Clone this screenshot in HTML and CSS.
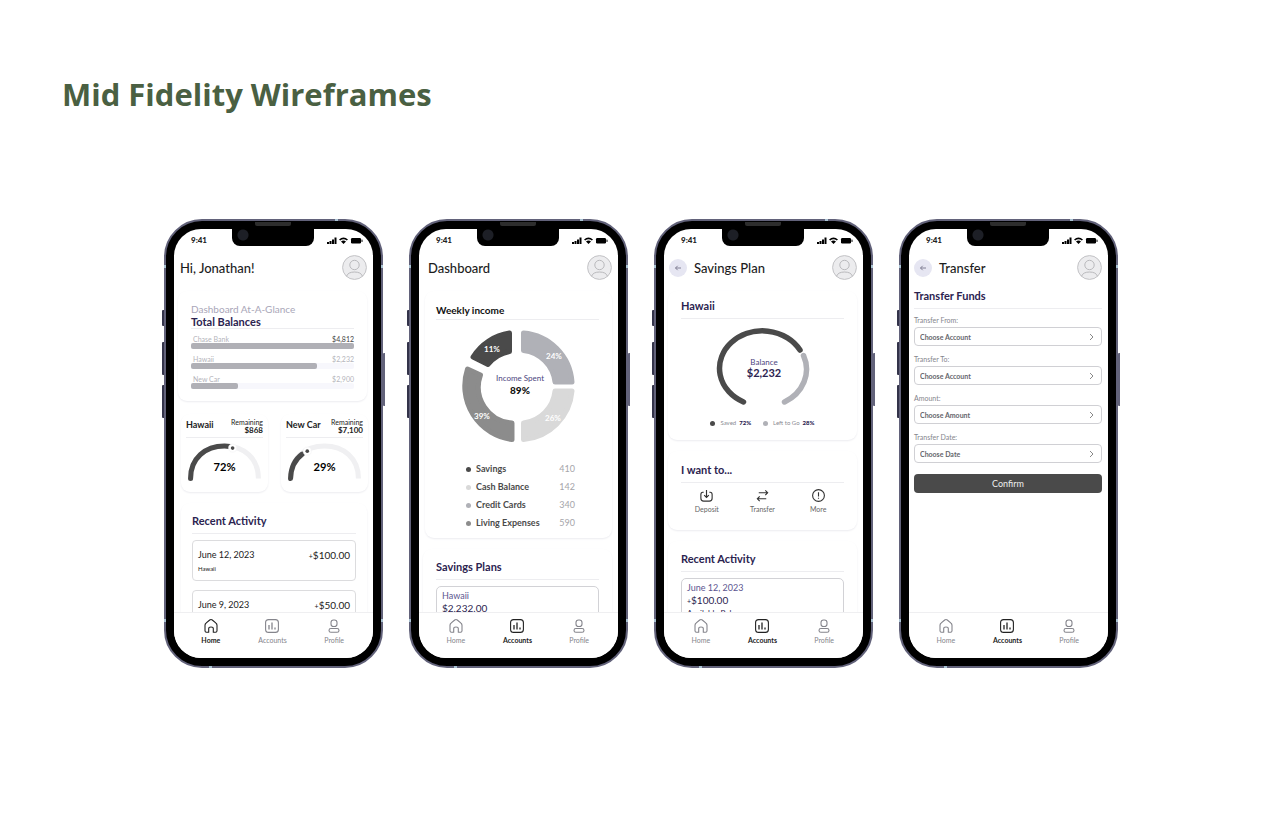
FILE: index.html
```
<!DOCTYPE html>
<html lang="en">
<head>
<meta charset="utf-8">
<meta name="viewport" content="width=device-width, initial-scale=1">
<title>Mid Fidelity Wireframes</title>
<link rel="stylesheet" href="styles.css">
</head>
<body>
<svg class="defs" aria-hidden="true">
  <symbol id="signal" viewBox="0 0 36 11">
    <path d="M0 7h2v2H0zM2.500 6h2v3h-2zM5 4.500h2v4.500H5zM7.500 2.500h2v6.500h-2z"/>
    <path d="M12 4.400Q16.500 .4 21 4.400L19.800 5.600Q16.500 2.800 13.200 5.600zM14 6.400Q16.500 4.400 19 6.400L16.500 9z"/>
    <rect x="24" y="3" width="10" height="5.500" rx="1.200"/><rect x="34.500" y="4.500" width="1" height="2.500" rx=".5"/>
  </symbol>
  <symbol id="avatar" viewBox="0 0 25 25">
    <circle cx="12.500" cy="12.500" r="11.900" fill="#ececee" stroke="#c2c2c5"/>
    <circle cx="12.500" cy="10" r="4.700" fill="none" stroke="#b9b9bc"/>
    <path d="M4.500 21.300Q6 17 12.500 17t8 4.300" fill="none" stroke="#b9b9bc"/>
  </symbol>
  <symbol id="back" viewBox="0 0 18 18">
    <path d="M12 9H6.500M8.700 6.800L6.500 9l2.200 2.200" fill="none" stroke="#77758a" stroke-width=".9"/>
  </symbol>
  <symbol id="home" viewBox="0 0 16 16">
    <path d="M4.600 14.200H3.400Q2 14.200 2 12.700V7.200Q2 6 3 5.200L6.700 2Q8 1 9.300 2L13 5.200Q14 6 14 7.200v5.500q0 1.500-1.400 1.500H10.300V10.600Q10.300 9 8 9t-2.300 1.600v3.600z" fill="none" stroke="currentColor" stroke-width="1.100" stroke-linejoin="round"/>
  </symbol>
  <symbol id="chart" viewBox="0 0 16 16">
    <rect x="1.600" y="1.600" width="12.800" height="12.800" rx="3" fill="none" stroke="currentColor" stroke-width="1.100"/>
    <path d="M5 7v4.500M8 4.500v7M11 9.500v2" fill="none" stroke="currentColor" stroke-width="1.300"/>
  </symbol>
  <symbol id="person" viewBox="0 0 16 16">
    <rect x="5" y="2" width="6" height="6.500" rx="2.600" fill="none" stroke="currentColor" stroke-width="1.100"/>
    <rect x="3" y="10.500" width="10" height="3.800" rx="1.900" fill="none" stroke="currentColor" stroke-width="1.100"/>
  </symbol>
</svg>

<h1 class="page-title">Mid Fidelity Wireframes</h1>

<main class="phones">
  <section class="phone" aria-label="Home">
    <i class="key key-mute"></i><i class="key key-up"></i><i class="key key-down"></i><i class="key key-power"></i>
    <i class="notch"></i><i class="speaker"></i><i class="tick tick-top"></i><i class="tick tick-bottom"></i><i class="tick tick-upper"></i><i class="tick tick-lower"></i>
    <div class="screen">
      <div class="status"><span>9:41</span><svg class="signal"><use href="#signal"/></svg></div>
      <header class="head head-home"><h2>Hi, Jonathan!</h2><svg class="avatar"><use href="#avatar"/></svg></header>
      <div class="content">
        <article class="card balances">
          <p class="eyebrow">Dashboard At-A-Glance</p>
          <h3 class="tight">Total Balances</h3>
          <div class="balance strong"><span>Chase Bank</span><b>$4,812</b><div class="track"><div class="fill" style="width:100%"></div></div></div>
          <div class="balance"><span>Hawaii</span><b>$2,232</b><div class="track"><div class="fill" style="width:77%"></div></div></div>
          <div class="balance"><span>New Car</span><b>$2,900</b><div class="track"><div class="fill" style="width:29%"></div></div></div>
        </article>
        <div class="goals">
          <article class="card goal">
            <div class="goal-head"><h4>Hawaii</h4><p>Remaining<b>$868</b></p></div>
            <svg class="gauge" viewBox="0 0 76 42">
              <path d="M4.500 37C4.500 17 19 5 38 5s33.500 12 33.500 32" fill="none" stroke="#f0f0f2" stroke-width="5"/>
              <path d="M4.500 37C4.500 17 19 5 38 5q3 0 5 .5" fill="none" stroke="#4a4a4a" stroke-width="5" stroke-linecap="round"/>
              <circle cx="46" cy="7" r="4" fill="#fff" stroke="#f2f2f4" stroke-width=".6"/><circle cx="46" cy="7" r="1.800" fill="#4a4a4a"/>
              <text x="38" y="30" class="gauge-num">72%</text>
            </svg>
          </article>
          <article class="card goal">
            <div class="goal-head"><h4>New Car</h4><p>Remaining<b>$7,100</b></p></div>
            <svg class="gauge" viewBox="0 0 76 42">
              <path d="M4.500 37C4.500 17 19 5 38 5s33.500 12 33.500 32" fill="none" stroke="#f0f0f2" stroke-width="5"/>
              <path d="M4.500 37Q5 21 16 13" fill="none" stroke="#4a4a4a" stroke-width="5" stroke-linecap="round"/>
              <circle cx="21" cy="10" r="4" fill="#fff" stroke="#f2f2f4" stroke-width=".6"/><circle cx="21" cy="10" r="1.800" fill="#4a4a4a"/>
              <text x="38" y="30" class="gauge-num">29%</text>
            </svg>
          </article>
        </div>
        <article class="card activity">
          <h3>Recent Activity</h3>
          <div class="entry"><span>June 12, 2023</span><b><small>+</small>$100.00</b><em>Hawaii</em></div>
          <div class="entry"><span>June 9, 2023</span><b><small>+</small>$50.00</b></div>
        </article>
      </div>
      <nav class="tabs">
        <a href="#" class="on"><svg><use href="#home"/></svg>Home</a>
        <a href="#"><svg><use href="#chart"/></svg>Accounts</a>
        <a href="#"><svg><use href="#person"/></svg>Profile</a>
      </nav>
    </div>
  </section>

  <section class="phone" aria-label="Dashboard">
    <i class="key key-mute"></i><i class="key key-up"></i><i class="key key-down"></i><i class="key key-power"></i>
    <i class="notch"></i><i class="speaker"></i><i class="tick tick-top"></i><i class="tick tick-bottom"></i><i class="tick tick-upper"></i><i class="tick tick-lower"></i>
    <div class="screen">
      <div class="status"><span>9:41</span><svg class="signal"><use href="#signal"/></svg></div>
      <header class="head head-plain"><h2>Dashboard</h2><svg class="avatar"><use href="#avatar"/></svg></header>
      <div class="content">
        <article class="card income">
          <h3 class="black">Weekly income</h3>
          <svg class="donut" viewBox="461 329 116 115">
            <g stroke-width="5" stroke-linejoin="round">
              <path d="M524.500 333A53 53 0 0 1 573 382H556A36 36 0 0 0 524.500 350.500z" fill="#b0b1b7" stroke="#b0b1b7"/>
              <path d="M573 391A53 53 0 0 1 524.500 439.500V423A36 36 0 0 0 556 391z" fill="#d9d9d9" stroke="#d9d9d9"/>
              <path d="M513 439.500A54 54 0 0 1 468.500 369L481.500 375A36 36 0 0 0 513 423z" fill="#8c8c8c" stroke="#8c8c8c"/>
              <path d="M474 357A52 52 0 0 1 510.500 333V351.500A36 36 0 0 0 489 364.500z" fill="#4a4a4a" stroke="#4a4a4a"/>
            </g>
            <g class="slice-num"><text x="493" y="352">11%</text><text x="555" y="359">24%</text><text x="554" y="421">26%</text><text x="483" y="419">39%</text></g>
            <text x="521" y="381" class="donut-label">Income Spent</text>
            <text x="521" y="394" class="donut-num">89%</text>
          </svg>
          <ul class="legend">
            <li class="c1">Savings<span>410</span></li>
            <li class="c2">Cash Balance<span>142</span></li>
            <li class="c3">Credit Cards<span>340</span></li>
            <li class="c4">Living Expenses<span>590</span></li>
          </ul>
        </article>
        <article class="card plans">
          <h3>Savings Plans</h3>
          <div class="note"><p>Hawaii</p><b>$2,232.00</b></div>
        </article>
      </div>
      <nav class="tabs">
        <a href="#"><svg><use href="#home"/></svg>Home</a>
        <a href="#" class="on"><svg><use href="#chart"/></svg>Accounts</a>
        <a href="#"><svg><use href="#person"/></svg>Profile</a>
      </nav>
    </div>
  </section>

  <section class="phone" aria-label="Savings Plan">
    <i class="key key-mute"></i><i class="key key-up"></i><i class="key key-down"></i><i class="key key-power"></i>
    <i class="notch"></i><i class="speaker"></i><i class="tick tick-top"></i><i class="tick tick-bottom"></i><i class="tick tick-upper"></i><i class="tick tick-lower"></i>
    <div class="screen">
      <div class="status"><span>9:41</span><svg class="signal"><use href="#signal"/></svg></div>
      <header class="head"><button class="back" aria-label="Back"><svg><use href="#back"/></svg></button><h2>Savings Plan</h2><svg class="avatar"><use href="#avatar"/></svg></header>
      <div class="content">
        <article class="card plan">
          <h3>Hawaii</h3>
          <svg class="ring" viewBox="714 326 96 82">
            <path d="M742.500 402A43 37.500 0 1 1 799 350" fill="none" stroke="#4a4a4a" stroke-width="5.500" stroke-linecap="round"/>
            <path d="M802.500 355.500A43 37.500 0 0 1 783.500 402" fill="none" stroke="#b0b1b7" stroke-width="5.500" stroke-linecap="round"/>
            <text x="763" y="365" class="donut-label">Balance</text>
            <text x="763" y="377" class="ring-num">$2,232</text>
          </svg>
          <p class="shares"><span class="c1">Saved <b>72%</b></span><span class="c3">Left to Go <b>28%</b></span></p>
        </article>
        <article class="card wants">
          <h3>I want to...</h3>
          <div class="actions">
            <button><svg viewBox="0 0 16 16"><path d="M5 4.500H4Q2 4.500 2 7v4q0 3 3 3h6q3 0 3-3V7q0-2.500-2-2.500h-1M8 2v8M5.500 7.500L8 10l2.500-2.500"/></svg>Deposit</button>
            <button><svg viewBox="0 0 16 16"><path d="M4 5h9.500M11 2.500L13.500 5 11 7.500M12 11.500H2.500M5 9l-2.500 2.500L5 14"/></svg>Transfer</button>
            <button><svg viewBox="0 0 16 16"><circle cx="8" cy="8" r="6.300"/><path d="M8 4.500v4.500M8 10.500v1"/></svg>More</button>
          </div>
        </article>
        <article class="card plans">
          <h3>Recent Activity</h3>
          <div class="note"><p>June 12, 2023</p><b><small>+</small>$100.00</b><em>Available Bal</em></div>
        </article>
      </div>
      <nav class="tabs">
        <a href="#"><svg><use href="#home"/></svg>Home</a>
        <a href="#" class="on"><svg><use href="#chart"/></svg>Accounts</a>
        <a href="#"><svg><use href="#person"/></svg>Profile</a>
      </nav>
    </div>
  </section>

  <section class="phone" aria-label="Transfer">
    <i class="key key-mute"></i><i class="key key-up"></i><i class="key key-down"></i><i class="key key-power"></i>
    <i class="notch"></i><i class="speaker"></i><i class="tick tick-top"></i><i class="tick tick-bottom"></i><i class="tick tick-upper"></i><i class="tick tick-lower"></i>
    <div class="screen">
      <div class="status"><span>9:41</span><svg class="signal"><use href="#signal"/></svg></div>
      <header class="head"><button class="back" aria-label="Back"><svg><use href="#back"/></svg></button><h2>Transfer</h2><svg class="avatar"><use href="#avatar"/></svg></header>
      <form class="content transfer">
        <h3>Transfer Funds</h3>
        <label for="from">Transfer From:</label>
        <div class="pick"><select id="from"><option>Choose Account</option></select><svg viewBox="0 0 6 8"><path d="M2 1l3 3-3 3"/></svg></div>
        <label for="to">Transfer To:</label>
        <div class="pick"><select id="to"><option>Choose Account</option></select><svg viewBox="0 0 6 8"><path d="M2 1l3 3-3 3"/></svg></div>
        <label for="amount">Amount:</label>
        <div class="pick"><select id="amount"><option>Choose Amount</option></select><svg viewBox="0 0 6 8"><path d="M2 1l3 3-3 3"/></svg></div>
        <label for="date">Transfer Date:</label>
        <div class="pick"><select id="date"><option>Choose Date</option></select><svg viewBox="0 0 6 8"><path d="M2 1l3 3-3 3"/></svg></div>
        <button type="button" class="confirm">Confirm</button>
      </form>
      <nav class="tabs">
        <a href="#"><svg><use href="#home"/></svg>Home</a>
        <a href="#" class="on"><svg><use href="#chart"/></svg>Accounts</a>
        <a href="#"><svg><use href="#person"/></svg>Profile</a>
      </nav>
    </div>
  </section>
</main>
</body>
</html>
```
FILE: styles.css
```
* { box-sizing: border-box; }
body {
  margin: 0;
  padding: 74px 0 148px;
  background: #fff;
  color: #222;
  font-family: Lato, "Open Sans", sans-serif;
}
h1, h2, h3, h4, p, ul { margin: 0; padding: 0; font-weight: inherit; }
button { border: 0; padding: 0; font-family: inherit; cursor: pointer; }
em { font-style: normal; }
.defs { position: absolute; width: 0; height: 0; }

.page-title {
  margin: 0 62px 105px;
  font-family: "Open Sans", Lato, sans-serif;
  font-size: 31px;
  line-height: 40px;
  font-weight: 700;
  color: #4a6042;
}

.phones { display: flex; justify-content: center; gap: 26px; padding-left: 2px; }

/* Device frame */
.phone {
  position: relative;
  flex: 0 1 219px;
  min-width: 0;
  aspect-ratio: 219 / 449;
  padding: 8px;
  border: 2px solid #62627a;
  border-radius: 38px;
  background: #000;
}
.screen {
  display: flex;
  flex-direction: column;
  height: 100%;
  overflow: hidden;
  border-radius: 27px;
  background: #fff;
}
.notch {
  position: absolute;
  top: 6px;
  left: 50%;
  width: 82px;
  height: 19px;
  margin-left: -42px;
  border-radius: 0 0 8px 8px;
  background: radial-gradient(circle at 11px 8px, #1d1f26 0 5px, transparent 6px), #000;
}
.speaker {
  position: absolute;
  top: 1px;
  left: 50%;
  width: 36px;
  height: 4px;
  margin-left: -19px;
  border-radius: 0 0 2px 2px;
  background: #2d2d2d;
}
.key { position: absolute; left: -4px; width: 2px; border-radius: 1px 0 0 1px; background: #33334a; }
.key-mute { top: 89px; height: 16px; }
.key-up { top: 121px; height: 33px; }
.key-down { top: 164px; height: 33px; }
.key-power { left: auto; right: -4px; top: 132px; height: 53px; background: #62627a; }
.tick { position: absolute; background: #a9c3d3; }
.tick-top, .tick-bottom { width: 3px; height: 2px; }
.tick-top { top: -2px; right: 43px; }
.tick-bottom { bottom: -2px; left: 43px; }
.tick-upper, .tick-lower { left: -2px; right: -2px; height: 3px; background: linear-gradient(90deg, #a9c3d3 2px, transparent 2px calc(100% - 2px), #a9c3d3 calc(100% - 2px)); }
.tick-upper { top: 44px; }
.tick-lower { bottom: 44px; }

.status {
  display: flex;
  justify-content: space-between;
  align-items: center;
  height: 22px;
  padding: 0 10px 0 17px;
  font-size: 8px;
  font-weight: 900;
  line-height: 22px;
}
.signal { width: 36px; height: 11px; }

.head { display: flex; align-items: center; gap: 7px; height: 33px; padding: 0 6px 0 5px; }
.head-plain { padding-left: 9px; }
.head-home { padding-left: 6px; }
.head h2 { flex: 1; font-size: 13px; line-height: 16px; font-weight: 500; color: #1c1c1c; }
.avatar { width: 25px; height: 25px; }
.back { width: 18px; height: 18px; border-radius: 50%; background: #e6e6f2; }
.back svg { display: block; width: 18px; height: 18px; }

.content { flex: 1; min-height: 0; overflow: hidden; padding: 7px 6px 0 4px; }

.card { border-radius: 9px; background: #fff; box-shadow: 0 1px 2px #ececf0; }
h3 {
  padding-bottom: 5px;
  border-bottom: 1px solid #ededf0;
  font-size: 11px;
  line-height: 14px;
  font-weight: 700;
  color: #2b2350;
}
h3.tight { padding-bottom: 0; line-height: 12px; }
h3.black { padding-bottom: 2px; font-size: 10px; color: #111; }

/* Home */
.balances { padding: 12px 13px; }
.eyebrow { font-size: 10px; line-height: 13px; color: #a9a6b8; }
.balance {
  display: flex;
  flex-wrap: wrap;
  justify-content: space-between;
  padding: 6px 0 0 2px;
  font-size: 7px;
  line-height: 8px;
  color: #b4b4bb;
}
.balance b { font-weight: 400; }
.balance.strong b { color: #444; }
.track { flex: 1 0 100%; height: 6px; margin-left: -2px; border-radius: 2px; background: #f7f7fc; }
.fill { height: 100%; border-radius: 2px; background: #b0b0b6; }
.goals { display: grid; grid-template-columns: 1fr 1fr; gap: 13px; margin: 13px -1px 11px 3px; }
.goal { padding: 5px 5px 8px; }
.goal-head {
  display: flex;
  justify-content: space-between;
  height: 19px;
  border-bottom: 1px solid #ededf0;
}
.goal h4 { font-size: 9px; line-height: 11px; font-weight: 700; }
.goal p { font-size: 7px; line-height: 7px; text-align: right; }
.goal p b { display: block; font-size: 8px; line-height: 8px; }
.gauge { display: block; width: 100%; margin-top: 3px; }
.gauge-num { font-size: 11px; font-weight: 700; text-anchor: middle; }
.activity { padding: 11px; margin-left: 3px; }
.entry {
  display: flex;
  flex-wrap: wrap;
  justify-content: space-between;
  margin-top: 9px;
  padding: 7px 5px 6px;
  border: 1px solid #dcdcde;
  border-radius: 4px;
  font-size: 9px;
  line-height: 14px;
  color: #222;
}
.entry:nth-of-type(1) { margin-top: 6px; }
.entry b { font-size: 10px; font-weight: 400; }
.entry small, .note small { font-size: 7px; }
.entry em { flex: 1 0 100%; font-size: 6px; line-height: 11px; }

/* Dashboard */
.income { padding: 12px 13px 6px 11px; margin-left: 2px; }
.donut { display: block; width: 116px; margin: 9px auto 16px; }
.slice-num { fill: #fff; font-size: 8px; font-weight: 700; text-anchor: middle; }
.donut-label { fill: #4d4680; font-size: 8px; text-anchor: middle; }
.donut-num { fill: #111; font-size: 10px; font-weight: 900; text-anchor: middle; }
.legend { padding: 0 24px 0 30px; list-style: none; font-size: 9px; line-height: 18px; font-weight: 700; color: #4a4a4a; }
.legend li { display: flex; align-items: center; }
.legend span { margin-left: auto; font-weight: 400; color: #a5a5aa; }
.legend li::before, .shares span::before { content: ""; width: 5px; height: 5px; margin-right: 5px; border-radius: 50%; background: var(--dot); }
.c1 { --dot: #4a4a4a; }
.c2 { --dot: #d9d9d9; }
.c3 { --dot: #b0b1b7; }
.c4 { --dot: #8c8c8c; }
.plans { margin-top: 11px; padding: 11px 13px; }
.note {
  margin-top: 6px;
  padding: 3px 5px 6px;
  border: 1px solid #d2d2d6;
  border-radius: 5px;
  color: #2b2350;
  font-size: 9px;
  line-height: 12px;
}
.note p { color: #5c5690; }
.note b { display: block; font-size: 10px; font-weight: 400; }
.note em { display: block; font-size: 8px; line-height: 12px; }

/* Savings plan */
.plan { padding: 8px 13px 11px; }
.ring { display: block; width: 96px; margin: 7px auto 9px; }
.ring-num { fill: #2b2350; font-size: 11px; font-weight: 700; text-anchor: middle; }
.shares { display: flex; justify-content: center; gap: 12px; font-size: 6px; line-height: 12px; color: #8a8a92; }
.shares span { display: flex; align-items: center; }
.shares b { margin-left: 3px; font-weight: 900; color: #2b2350; }
.wants { margin-top: 11px; padding: 12px 13px 15px; }
.actions { display: grid; grid-template-columns: 1fr 1fr 1fr; margin: 5px -2px 0; }
.actions button { background: none; font-size: 7px; line-height: 12px; color: #666; }
.actions svg { display: block; width: 15px; height: 15px; margin: 0 auto; fill: none; stroke: #333; stroke-width: 1.200; }

/* Transfer */
.transfer { padding: 5px 6px 0 5px; }
.transfer h3 { margin-bottom: 5px; }
.transfer label { display: block; font-size: 7px; line-height: 12px; color: #85858c; }
.pick { position: relative; margin: 1px 0 7px; }
.pick select {
  display: block;
  width: 100%;
  height: 19px;
  padding: 0 5px;
  border: 1px solid #d0d0d4;
  border-radius: 4px;
  appearance: none;
  background: #fff;
  color: #66666c;
  font: 700 7px/16px Lato, "Open Sans", sans-serif;
}
.pick svg { position: absolute; top: 6px; right: 8px; width: 6px; height: 8px; fill: none; stroke: #888; pointer-events: none; }
.confirm { width: 100%; height: 19px; margin-top: 4px; border-radius: 4px; background: #4a4a4a; color: #eee; font-size: 9px; line-height: 19px; }

/* Tab bar */
.tabs {
  display: grid;
  grid-template-columns: 1fr 1fr 1fr;
  height: 46px;
  padding: 5px 8px 0 6px;
  border-top: 1px solid #efeff1;
  background: #fff;
}
.tabs a { text-align: center; text-decoration: none; font-size: 7px; line-height: 12px; color: #85858c; }
.tabs .on { color: #222; font-weight: 700; }
.tabs svg { display: block; width: 16px; height: 16px; margin: 0 auto; }
```
